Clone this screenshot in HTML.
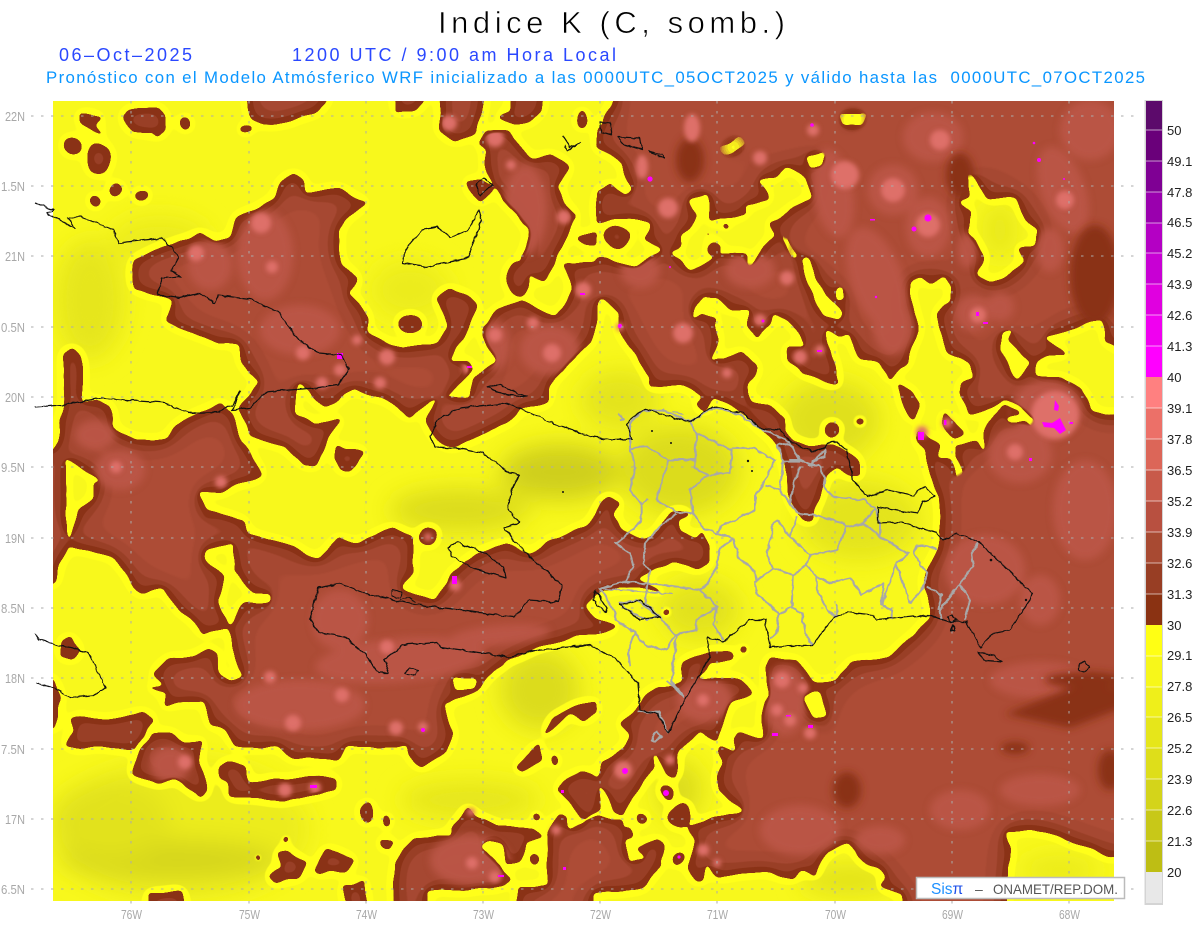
<!DOCTYPE html>
<html><head><meta charset="utf-8"><title>Indice K</title>
<style>html,body{margin:0;padding:0;background:#fff}svg{display:block}text{font-family:"Liberation Sans",sans-serif}</style>
</head><body>
<svg width="1200" height="927" viewBox="0 0 1200 927" xmlns="http://www.w3.org/2000/svg">
<defs>
<clipPath id="plot"><rect x="53" y="101" width="1061" height="800"/></clipPath>
<filter id="soft" x="-100" y="-100" width="1500" height="1200" filterUnits="userSpaceOnUse"><feGaussianBlur stdDeviation="12"/></filter>
<filter id="s5" x="-100" y="-100" width="1500" height="1200" filterUnits="userSpaceOnUse"><feGaussianBlur stdDeviation="4"/></filter>
<filter id="s3" x="-100" y="-100" width="1500" height="1200" filterUnits="userSpaceOnUse"><feGaussianBlur stdDeviation="2.5"/></filter>
<filter id="wob" x="-100" y="-100" width="1500" height="1200" filterUnits="userSpaceOnUse" color-interpolation-filters="sRGB">
 <feTurbulence type="fractalNoise" baseFrequency=".13" numOctaves="2" seed="7" result="n"/>
 <feDisplacementMap in="SourceGraphic" in2="n" scale="4" xChannelSelector="R" yChannelSelector="G"/>
</filter>
<filter id="bands" x="-100" y="-100" width="1500" height="1200" filterUnits="userSpaceOnUse" color-interpolation-filters="sRGB">
 <feTurbulence type="fractalNoise" baseFrequency=".035" numOctaves="2" seed="3" result="n"/>
 <feDisplacementMap in="SourceAlpha" in2="n" scale="9" xChannelSelector="R" yChannelSelector="G" result="d"/>
 <feGaussianBlur in="d" stdDeviation="2" result="b0"/>
 <feComponentTransfer in="b0" result="t0"><feFuncA type="linear" slope="40" intercept="-19.5"/></feComponentTransfer>
 <feFlood flood-color="#8a3216"/><feComposite in2="t0" operator="in" result="c0"/>
 <feGaussianBlur in="d" stdDeviation="7" result="b1"/>
 <feComponentTransfer in="b1" result="t1"><feFuncA type="linear" slope="40" intercept="-31.5"/></feComponentTransfer>
 <feFlood flood-color="#993f26"/><feComposite in2="t1" operator="in" result="c1"/>
 <feGaussianBlur in="d" stdDeviation="12" result="b2"/>
 <feComponentTransfer in="b2" result="t2"><feFuncA type="linear" slope="40" intercept="-33.5"/></feComponentTransfer>
 <feFlood flood-color="#a64832"/><feComposite in2="t2" operator="in" result="c2"/>
 <feGaussianBlur in="d" stdDeviation="18" result="b3"/>
 <feComponentTransfer in="b3" result="t3"><feFuncA type="linear" slope="40" intercept="-35.5"/></feComponentTransfer>
 <feFlood flood-color="#ad4c36"/><feComposite in2="t3" operator="in" result="c3"/>
 <feMerge><feMergeNode in="c0"/><feMergeNode in="c1"/><feMergeNode in="c2"/><feMergeNode in="c3"/></feMerge>
</filter>
<filter id="halo" x="-100" y="-100" width="1500" height="1200" filterUnits="userSpaceOnUse" color-interpolation-filters="sRGB">
 <feTurbulence type="fractalNoise" baseFrequency=".035" numOctaves="2" seed="3" result="n"/>
 <feDisplacementMap in="SourceAlpha" in2="n" scale="9" xChannelSelector="R" yChannelSelector="G" result="d"/>
 <feGaussianBlur in="d" stdDeviation="6"/>
 <feComponentTransfer result="t"><feFuncA type="linear" slope="30" intercept="-3"/></feComponentTransfer>
 <feFlood flood-color="#ffff1a"/><feComposite in2="t" operator="in"/>
</filter>
<filter id="inner" x="-100" y="-100" width="1500" height="1200" filterUnits="userSpaceOnUse" color-interpolation-filters="sRGB">
 <feTurbulence type="fractalNoise" baseFrequency=".035" numOctaves="2" seed="3" result="n"/>
 <feDisplacementMap in="SourceAlpha" in2="n" scale="9" xChannelSelector="R" yChannelSelector="G" result="d"/>
 <feGaussianBlur in="d" stdDeviation="5"/>
 <feComponentTransfer result="t"><feFuncA type="linear" slope="8" intercept="-5"/></feComponentTransfer>
 <feFlood flood-color="#fff"/><feComposite in2="t" operator="in"/>
</filter>
<mask id="holes" maskUnits="userSpaceOnUse" x="-100" y="-100" width="1500" height="1200">
<rect x="-100" y="-100" width="1500" height="1200" fill="#fff"/>
<g fill="#000">
<polygon points="596,147 620,163 625,180 632,190 625,197 610,183 596,190"/>
<polygon points="590,90 618,90 612,108 600,125 590,130"/>
<polygon points="590,225 630,217 652,223 643,240 662,250 637,265 590,255"/>
<polygon points="670,252 680,247 680,237 688,230 698,213 688,200 708,193 710,220 747,215 747,205 770,200 757,180 777,180 788,167 807,178 812,197 787,213 768,223 775,235 765,247 747,270 747,253 733,250 715,257 690,272 683,260"/>
<polygon points="717,147 730,143 738,135 747,143 733,155 722,155"/>
<polygon points="805,155 827,152 822,165 810,168"/>
<polygon points="838,113 870,115 863,127 842,125"/>
<polygon points="999,155 1008,154 1007,163 1002,163"/>
<polygon points="968,170 977,183 987,198 1017,198 1025,220 1040,228 1037,245 1017,247 1025,262 1007,277 990,282 978,273 982,257 977,240 968,233 972,213 960,202 970,197"/>
<polygon points="1042,338 1070,330 1102,320 1105,340 1130,353 1130,412 1092,412 1083,387 1060,377 1035,378 1035,363 1047,357 1068,357 1058,348"/>
<polygon points="1003,330 1015,328 1008,340 1030,363 1017,380 1008,370 1000,350"/>
<polygon points="783,233 788,232 799,257 793,257"/>
<polygon points="800,260 806,258 820,285 842,313 838,320 825,316 812,290"/>
<polygon points="837,290 842,288 844,300 838,303"/>
<polygon points="803,698 820,693 827,717 813,717"/>
<polygon points="829,735 832,730 836,745 830,752"/>
<polygon points="1005,830 1030,830 1060,837 1112,857 1130,857 1130,960 1000,960 1007,877 1007,867 1012,850"/>
<polygon points="1050,712 1072,707 1062,713"/>
<polygon points="64,457 104,482 93,482 93,500 77,510 68,547"/>
<polygon points="207,550 234,543 232,570 253,593 269,593 269,603 246,603 230,627 217,600 227,577 207,560"/>
<ellipse cx="280" cy="575" rx="4" ry="6"/><ellipse cx="253" cy="563" rx="3" ry="3"/><ellipse cx="203" cy="521" rx="5" ry="3"/>
<polygon points="453,677 476,677 472,687 455,690"/>
<ellipse cx="265" cy="350" rx="4" ry="8"/>
<ellipse cx="529" cy="357" rx="6" ry="10"/><ellipse cx="525" cy="335" rx="5" ry="11"/>
<ellipse cx="1018" cy="420" rx="12" ry="3"/>
</g>
</mask>
<g id="brown">
<g mask="url(#holes)">
<polygon points="596,40 1180,40 1180,960 902,960 902,893 877,887 888,877 877,867 858,857 850,843 827,852 817,877 800,870 790,880 770,873 718,877 707,863 703,880 697,883 688,867 693,840 687,827 700,820 743,813 718,790 717,777 723,762 717,753 720,747 733,753 733,740 740,732 763,737 763,700 767,693 765,667 770,657 777,657 797,660 813,683 837,680 850,662 890,657 913,637 928,617 925,590 927,570 942,537 938,497 930,473 927,450 915,440 918,430 925,432 930,438 942,445 938,458 950,458 957,483 962,472 953,453 952,443 977,440 987,460 985,433 993,417 1005,405 1020,412 1032,428 1035,420 1022,408 1005,400 985,412 970,415 960,393 960,383 973,380 970,363 962,357 947,353 940,330 937,313 950,303 952,288 943,273 930,285 920,277 910,283 915,313 917,327 910,363 900,367 890,380 880,363 860,357 850,333 840,337 823,330 837,373 840,383 833,383 803,373 787,360 785,345 807,347 787,320 773,313 770,327 760,340 748,327 750,310 730,310 717,297 703,297 690,320 703,313 717,320 713,327 720,340 707,363 717,358 723,360 742,353 757,367 748,383 752,402 770,405 787,417 787,428 785,430 793,443 813,447 833,443 847,453 860,460 860,477 850,478 837,470 827,477 817,503 813,522 803,522 797,513 790,497 783,463 777,447 763,432 743,413 713,398 705,412 695,403 703,395 697,393 683,385 650,387 650,377 633,353 617,330 617,313 600,300 596,297"/>
<polygon points="10,450 53,453 58,443 62,407 64,353 74,348 83,357 83,387 81,403 98,400 110,407 112,427 135,440 165,440 173,428 219,400 232,413 240,443 265,473 223,492 198,490 207,508 246,523 250,537 265,538 284,543 317,560 338,537 357,543 391,528 414,537 414,570 403,587 433,600 450,577 464,560 506,543 529,553 552,538 586,527 602,503 610,498 622,503 615,517 623,530 643,537 660,530 673,513 692,512 680,520 683,530 697,537 702,530 710,547 708,563 697,570 673,562 652,570 635,580 673,593 650,590 623,587 605,590 585,605 595,618 620,627 600,635 576,638 537,650 507,660 476,690 446,703 442,700 453,733 446,750 423,768 409,757 407,747 377,747 345,745 339,760 293,757 277,747 235,747 224,730 208,725 205,700 164,707 166,693 143,688 164,685 153,672 166,658 193,657 210,647 218,655 220,673 231,680 245,675 231,647 228,628 204,633 181,613 163,590 142,593 112,558 68,547 62,560 53,583 10,583"/>
</g>
<polygon points="281,183 293,173 303,180 308,192 338,188 367,202 346,218 338,233 341,263 357,277 349,293 368,317 366,332 403,350 437,343 443,360 470,362 475,370 452,393 429,402 410,420 395,407 357,388 326,407 311,397 295,380 303,370 297,377 295,413 315,425 341,418 315,467 305,467 284,447 250,437 238,410 257,383 242,363 240,343 219,343 165,323 173,300 135,290 133,260 173,243 200,232 215,242 230,238 236,217 273,200"/>
<polygon points="437,345 448,325 438,300 450,288 478,306 464,337 445,362"/>
<polygon points="481,327 498,310 521,300 556,317 573,290 563,263 598,260 600,290 598,313 590,343 548,387 548,403 521,407 506,423 487,432 456,447 437,440 426,423 433,403 449,397 472,398 475,377 498,360 481,337"/>
<polygon points="488,128 509,127 515,140 530,157 553,152 570,167 557,185 564,202 575,217 556,263 544,282 533,277 521,260 529,230 502,200 499,192 486,172 486,152 476,145"/>
<polygon points="465,183 480,178 493,185 482,203 469,192"/>
<polygon points="575,237 597,232 597,247 585,245"/>
<polygon points="80,113 103,115 94,122 111,138 92,128 80,122"/>
<polygon points="128,110 159,108 164,115 164,130 157,140 151,133 132,132 122,117"/>
<polygon points="239,60 327,60 327,101 316,113 293,122 262,125 249,120"/>
<polygon points="386,60 426,60 426,101 415,110 396,113"/>
<polygon points="442,60 484,60 484,101 476,132 455,142 438,132 442,115"/>
<polygon points="509,60 543,60 543,101 541,112 530,123 515,123 499,115 510,112"/>
<ellipse cx="185" cy="124" rx="5" ry="6"/><ellipse cx="72" cy="146" rx="9" ry="9"/><ellipse cx="97" cy="158" rx="11" ry="15"/><ellipse cx="117" cy="190" rx="7" ry="7"/><ellipse cx="141" cy="195" rx="6" ry="6"/><ellipse cx="94" cy="201" rx="5" ry="5"/><ellipse cx="245" cy="131" rx="6" ry="4"/><ellipse cx="580" cy="120" rx="5" ry="9"/><ellipse cx="519" cy="280" rx="11" ry="17"/><ellipse cx="410" cy="324" rx="10" ry="9"/>
<ellipse cx="428" cy="537" rx="9" ry="8"/>
<polygon points="338,445 345,450 365,452 357,460 351,472 340,470 333,458"/>
<polygon points="71,635 80,647 73,660 61,657 61,640"/>
<polygon points="53,677 61,700 55,727 10,727 10,677"/>
<polygon points="67,717 78,715 105,720 143,712 155,717 145,730 136,750 99,747 63,747 73,730"/>
<polygon points="151,732 170,732 185,743 203,740 201,760 207,790 201,799 193,793 174,777 159,783 132,773 138,757"/>
<polygon points="218,767 228,763 247,765 250,782 277,780 304,775 335,777 335,790 319,795 285,802 250,797 228,797 226,780 218,777"/>
<ellipse cx="367" cy="813" rx="7" ry="11"/><ellipse cx="386" cy="822" rx="4" ry="6"/><polygon points="377,838 394,842 388,852 381,848"/><ellipse cx="285" cy="841" rx="3" ry="4"/><ellipse cx="258" cy="858" rx="3" ry="4"/><ellipse cx="537" cy="815" rx="4" ry="4"/><ellipse cx="534" cy="860" rx="6" ry="6"/>
<polygon points="539,742 541,760 522,772 514,767 530,750"/>
<polygon points="553,715 595,698 597,713 583,723 570,713 553,727 541,738"/>
<ellipse cx="552" cy="760" rx="4" ry="6"/>
<polygon points="275,853 289,850 308,862 296,877 277,883 268,875 281,867"/>
<polygon points="312,870 325,850 338,852 354,860 346,872 331,870 317,873"/>
<polygon points="149,893 182,892 187,950 149,950"/>
<polygon points="342,885 365,880 367,950 355,950"/>
<polygon points="392,950 394,863 413,837 449,838 451,827 469,807 478,817 499,827 532,827 543,838 524,843 520,863 507,863 503,843 488,840 480,847 501,863 513,880 505,887 427,892 430,950"/>
<polygon points="516,950 516,887 548,885 547,833 560,813 568,817 568,830 600,815 610,820 622,820 623,833 630,863 647,860 663,863 643,887 623,890 595,892 590,950"/>
<polygon points="637,850 658,837 665,843 660,863 648,860"/>
<polygon points="555,792 564,783 583,770 599,777 601,810 583,820 570,803"/>
<polygon points="620,727 643,700 657,687 683,680 710,678 743,680 752,693 733,700 723,727 718,743 700,732 680,750 675,780 668,777 658,757 653,747 655,767 633,797 623,817 613,813 607,797 600,783 600,763 623,747 630,737"/>
<polygon points="683,662 713,650 732,655 733,662 710,663 700,677 683,680"/>
<ellipse cx="743" cy="649" rx="4" ry="4"/><ellipse cx="666" cy="793" rx="6" ry="6"/><ellipse cx="642" cy="819" rx="5" ry="5"/><ellipse cx="628" cy="833" rx="6" ry="6"/><ellipse cx="679" cy="857" rx="6" ry="6"/><ellipse cx="680" cy="815" rx="11" ry="13"/>
<polygon points="897,380 913,390 920,407 913,420 903,407"/>
<polygon points="943,412 953,420 963,433 952,437 940,423"/>
<ellipse cx="832" cy="430" rx="7.5" ry="7.5"/><ellipse cx="860" cy="421" rx="4" ry="4"/><ellipse cx="668" cy="610" rx="3.5" ry="3.5"/>
<ellipse cx="617" cy="238" rx="13" ry="12"/><ellipse cx="713" cy="250" rx="8" ry="6"/><ellipse cx="727" cy="227" rx="4" ry="4"/><ellipse cx="707" cy="234" rx="3" ry="3"/>
</g>
<mask id="inside" maskUnits="userSpaceOnUse" x="-100" y="-100" width="1500" height="1200">
 <use href="#brown" filter="url(#inner)"/>
</mask>
</defs>

<rect width="1200" height="927" fill="#fff"/>

<g clip-path="url(#plot)">
 <rect x="53" y="101" width="1061" height="800" fill="#f8f81c"/>
 <g filter="url(#soft)">
  <ellipse cx="560" cy="472" rx="60" ry="28" fill="#cfcf1a"/>
  <ellipse cx="460" cy="510" rx="70" ry="22" fill="#dcdc1c"/>
  <ellipse cx="680" cy="470" rx="60" ry="45" fill="#dcdc1c"/>
  <ellipse cx="860" cy="520" rx="60" ry="40" fill="#e4e41c"/>
  <ellipse cx="830" cy="420" rx="50" ry="40" fill="#e0e01c"/>
  <ellipse cx="700" cy="610" rx="40" ry="30" fill="#e2e21c"/>
  <ellipse cx="620" cy="400" rx="40" ry="30" fill="#e4e41c"/>
  <ellipse cx="180" cy="830" rx="130" ry="70" fill="#ecec1c"/>
  <ellipse cx="170" cy="860" rx="110" ry="20" fill="#d6d61a"/>
  <ellipse cx="110" cy="820" rx="60" ry="40" fill="#e2e21c"/>
  <ellipse cx="90" cy="300" rx="35" ry="60" fill="#e6e61c"/>
  <ellipse cx="160" cy="240" rx="50" ry="25" fill="#ecec1c"/>
  <ellipse cx="470" cy="800" rx="70" ry="20" fill="#e6e61c"/>
  <ellipse cx="540" cy="690" rx="40" ry="40" fill="#dcdc1c"/>
  <ellipse cx="680" cy="790" rx="22" ry="30" fill="#dcdc1c"/>
  <ellipse cx="850" cy="880" rx="50" ry="16" fill="#e2e21c"/>
  <ellipse cx="1060" cy="870" rx="40" ry="15" fill="#eaea1c"/>
  <ellipse cx="410" cy="290" rx="40" ry="30" fill="#ecec1c"/>
  <ellipse cx="1000" cy="230" rx="18" ry="30" fill="#e8e81c"/>
 </g>
 <use href="#brown" filter="url(#halo)"/>
 <use href="#brown" filter="url(#bands)"/>

 <g mask="url(#inside)">
 <g filter="url(#s5)" fill="#bb5747" opacity=".95">
  <ellipse cx="833" cy="193" rx="20" ry="45" transform="rotate(-10 833 193)"/>
  <ellipse cx="893" cy="190" rx="25" ry="25"/><ellipse cx="928" cy="227" rx="22" ry="30"/><ellipse cx="933" cy="137" rx="30" ry="25"/>
  <ellipse cx="877" cy="280" rx="26" ry="55" transform="rotate(-20 877 280)"/><ellipse cx="893" cy="327" rx="20" ry="28"/>
  <ellipse cx="1063" cy="190" rx="22" ry="45" transform="rotate(-20 1063 190)"/><ellipse cx="1050" cy="250" rx="14" ry="22"/><ellipse cx="967" cy="250" rx="10" ry="18"/>
  <ellipse cx="973" cy="313" rx="18" ry="18"/><ellipse cx="1000" cy="307" rx="14" ry="14"/>
  <ellipse cx="1047" cy="410" rx="35" ry="30"/><ellipse cx="1020" cy="455" rx="32" ry="28"/><ellipse cx="1085" cy="510" rx="32" ry="50"/>
  <ellipse cx="1090" cy="130" rx="30" ry="30"/><ellipse cx="985" cy="570" rx="40" ry="35"/><ellipse cx="1040" cy="600" rx="20" ry="25"/>
  <ellipse cx="800" cy="830" rx="40" ry="25"/><ellipse cx="880" cy="840" rx="25" ry="14"/><ellipse cx="960" cy="810" rx="30" ry="20"/><ellipse cx="1040" cy="790" rx="40" ry="16"/><ellipse cx="1040" cy="680" rx="50" ry="18"/>
  <ellipse cx="400" cy="660" rx="85" ry="22" transform="rotate(-5 400 660)"/><ellipse cx="300" cy="705" rx="65" ry="25"/><ellipse cx="340" cy="620" rx="28" ry="30"/><ellipse cx="500" cy="635" rx="50" ry="10" transform="rotate(-5 500 635)"/>
  <ellipse cx="265" cy="255" rx="28" ry="45"/><ellipse cx="210" cy="265" rx="22" ry="25"/><ellipse cx="300" cy="330" rx="40" ry="25"/><ellipse cx="120" cy="470" rx="25" ry="20"/><ellipse cx="95" cy="435" rx="20" ry="15"/>
  <ellipse cx="705" cy="700" rx="28" ry="22"/><ellipse cx="785" cy="700" rx="22" ry="35"/><ellipse cx="470" cy="860" rx="40" ry="25"/><ellipse cx="170" cy="765" rx="20" ry="18"/>
  <ellipse cx="525" cy="210" rx="22" ry="45"/><ellipse cx="550" cy="350" rx="30" ry="25"/><ellipse cx="495" cy="345" rx="15" ry="25"/><ellipse cx="750" cy="270" rx="25" ry="18"/><ellipse cx="640" cy="270" rx="20" ry="18"/>
 </g>
 <g filter="url(#s5)" fill="#8a3216">
  <path d="M1005,714 L1070,688 L1130,686 L1130,705 L1070,728 Z"/>
  <ellipse cx="1015" cy="748" rx="14" ry="6"/><ellipse cx="847" cy="790" rx="14" ry="18"/><ellipse cx="1095" cy="275" rx="25" ry="50"/><ellipse cx="960" cy="175" rx="14" ry="22"/><ellipse cx="1085" cy="680" rx="40" ry="8"/><ellipse cx="1110" cy="770" rx="12" ry="20"/><ellipse cx="690" cy="160" rx="14" ry="22"/>
 </g>
 <g filter="url(#s3)" fill="#de6f69">
  <circle cx="261" cy="223" r="10"/><circle cx="196" cy="253" r="8"/><circle cx="272" cy="267" r="6"/><circle cx="387" cy="357" r="8"/><circle cx="357" cy="340" r="5"/><circle cx="380" cy="383" r="6"/><circle cx="303" cy="353" r="7"/><circle cx="340" cy="370" r="6"/><circle cx="322" cy="383" r="6"/>
  <circle cx="495" cy="335" r="7"/><circle cx="552" cy="353" r="9"/><circle cx="533" cy="323" r="6"/><circle cx="583" cy="290" r="8"/><circle cx="468" cy="368" r="6"/>
  <circle cx="495" cy="138" r="9"/><circle cx="449" cy="123" r="8"/><circle cx="511" cy="165" r="5"/><circle cx="564" cy="217" r="7"/>
  <ellipse cx="692" cy="128" rx="8" ry="14"/><ellipse cx="642" cy="167" rx="6" ry="12"/><circle cx="668" cy="208" r="10"/><circle cx="760" cy="158" r="7"/><circle cx="787" cy="278" r="7"/><circle cx="683" cy="333" r="10"/><circle cx="800" cy="357" r="7"/><circle cx="820" cy="350" r="5"/><circle cx="760" cy="320" r="6"/><circle cx="813" cy="130" r="6"/><circle cx="727" cy="373" r="5"/>
  <circle cx="845" cy="175" r="14"/><circle cx="893" cy="190" r="12"/><circle cx="928" cy="225" r="12"/><circle cx="940" cy="140" r="10"/><circle cx="1065" cy="200" r="9"/><circle cx="978" cy="315" r="8"/><circle cx="1055" cy="415" r="24"/><circle cx="1015" cy="452" r="8"/>
  <circle cx="782" cy="680" r="8"/><circle cx="803" cy="688" r="5"/><circle cx="777" cy="710" r="6"/><circle cx="790" cy="720" r="6"/><circle cx="810" cy="733" r="6"/><circle cx="623" cy="770" r="9"/><circle cx="670" cy="760" r="5"/><circle cx="703" cy="700" r="6"/><circle cx="703" cy="850" r="6"/><circle cx="717" cy="863" r="4"/>
  <circle cx="293" cy="723" r="8"/><circle cx="342" cy="695" r="7"/><circle cx="270" cy="677" r="6"/><circle cx="396" cy="728" r="7"/><circle cx="423" cy="727" r="5"/><circle cx="185" cy="762" r="7"/><circle cx="285" cy="790" r="7"/><circle cx="315" cy="788" r="6"/><circle cx="472" cy="863" r="6"/><circle cx="495" cy="877" r="6"/><circle cx="116" cy="467" r="6"/><circle cx="221" cy="482" r="6"/><circle cx="387" cy="647" r="7"/><circle cx="455" cy="585" r="6"/>
 </g>
 </g>
 <g filter="url(#s3)" fill="#de6f69">
  <circle cx="922" cy="432" r="6"/><circle cx="947" cy="423" r="5"/><circle cx="620" cy="327" r="4"/><circle cx="428" cy="537" r="4"/><circle cx="471" cy="812" r="4"/><circle cx="556" cy="830" r="5"/>
 </g>
 <g fill="#ff00ff">
  <circle cx="650" cy="179" r="2.6"/><circle cx="812" cy="125" r="1.8"/><circle cx="928" cy="218" r="3.6"/><circle cx="914" cy="229" r="2.5"/><circle cx="1039" cy="160" r="2"/><circle cx="1034" cy="143" r="1.3"/><circle cx="1064" cy="179" r="1"/><circle cx="876" cy="297" r="1.2"/><circle cx="670" cy="267" r="1"/>
  <rect x="580" y="293" width="5" height="2"/><circle cx="620" cy="326" r="2.2"/><circle cx="763" cy="321" r="1.5"/><rect x="817" y="350" width="5" height="2"/><rect x="337" y="353" width="6" height="6"/><rect x="467" y="366" width="5" height="2"/><rect x="452" y="576" width="5" height="8"/><rect x="918" y="432" width="6" height="8"/><rect x="944" y="420" width="2.5" height="5"/><rect x="976" y="312" width="3" height="4"/><rect x="983" y="322" width="5" height="2"/><rect x="1029" y="458" width="3" height="3"/>
  <path d="M1055,400 L1059,406 L1058,411 L1054,410 Z"/><path d="M1042,422 L1052,423 L1060,418 L1066,430 L1060,434 L1054,428 L1044,427 Z"/><rect x="1069" y="422" width="4" height="2"/>
  <circle cx="423" cy="730" r="2"/><rect x="310" y="785" width="7" height="3"/><rect x="772" y="733" width="6" height="3"/><rect x="786" y="715" width="5" height="1.5"/><rect x="808" y="725" width="5" height="3"/><circle cx="625" cy="771" r="3"/><circle cx="666" cy="793" r="3"/><rect x="561" y="790" width="3" height="3"/><rect x="498" y="875" width="6" height="2"/><rect x="563" y="867" width="3" height="3"/><circle cx="679" cy="857" r="1.6"/><rect x="870" y="219" width="5" height="1.5"/>
 </g>
</g>

<!-- grid -->
<g stroke="#ababab" stroke-width="1" stroke-dasharray="2.5 7.5" fill="none">
 <path d="M31,116H1136M31,186H1136M31,256H1136M31,327H1136M31,397H1136M31,467H1136M31,538H1136M31,608H1136M31,678H1136M31,749H1136M31,819H1136M31,889H1136"/>
 <path d="M131,101V905M249,101V905M366,101V905M483,101V905M600,101V905M717,101V905M835,101V905M952,101V905M1069,101V905"/>
</g>

<!-- province lines -->
<g filter="url(#wob)">
<g transform="translate(580 390) scale(.33333)" fill="none" stroke="#a8a8a8" stroke-width="6" stroke-linejoin="round">
 <path d="M150,100 L150,170 L165,235 L150,300 L185,345 L185,390 L130,445 L105,460 L150,490 L160,530 L135,575 L60,595 L100,660 L110,690 L165,730 L145,780 L150,830"/>
 <path d="M150,175 L200,170 L265,210 L345,210 L350,130 L330,95"/>
 <path d="M265,210 L230,330 L290,365 L340,370 L330,300 L385,255 L345,235 L350,130 L455,180 L450,250 L390,255"/>
 <path d="M455,175 L520,175 L585,210 L555,270 L525,320 L525,360 L430,405 L410,430 L370,415 L340,370"/>
 <path d="M205,325 L185,345 M150,100 L185,65 L250,60 L330,95 L400,55 L470,70 L540,115 L630,155"/>
 <path d="M555,285 L600,300 L610,210 L590,165 L630,160 L660,215 L610,215 M625,210 L660,210 L690,225 L735,180 L735,200 L695,215"/>
 <path d="M660,230 L640,290 L630,340 L650,370 L705,375 L750,390 L790,400 L800,410 L850,400 L885,355 L850,330 L760,320 L730,290 L735,265 L715,225 L680,225"/>
 <path d="M600,300 L630,340 M650,380 L630,440 L590,390 L575,405 L575,440 L560,485 L570,520 L580,535 L525,575 L530,610 L595,670 L590,730 L570,745"/>
 <path d="M630,440 L690,495 L680,525 L640,555 L580,535 M690,495 L770,480 L795,420 L800,410"/>
 <path d="M680,525 L710,560 L750,580 L810,565 L845,615 L910,580 L905,645 L935,660 L935,690"/>
 <path d="M640,555 L635,650 L595,675 M635,650 L665,670 L675,730 L700,765 M710,560 L715,610 L750,670 L770,680 L770,640"/>
 <path d="M850,400 L900,440 L985,490 L950,520 L905,645 M950,525 L990,640 L1030,590 L1040,550 L1000,490 L1010,465 L1070,475 M900,440 L900,400 L885,355"/>
 <path d="M1195,460 L1175,490 L1180,530 L1140,580 L1080,660 L1085,690 M1040,590 L1085,615 L1075,660 M1140,585 L1170,630 L1155,690"/>
 <path d="M460,445 L475,500 L525,545 L530,575 M460,445 L420,475 L410,530 L385,580 L360,600 L200,580 L130,575 M360,600 L410,650 L400,700 L430,750 M410,430 L460,445"/>
 <path d="M410,650 L350,690 L350,720 L285,735 L260,780 L195,765 L150,715 M290,735 L275,875 L310,920 L260,870"/>
 <path d="M195,460 L240,410 L290,370 M195,460 L190,520 L210,540 L195,640 L240,680 L285,735"/>
 <path d="M170,965 L235,965 L265,1030 M215,1050 L230,1025 L245,1040 L225,1055 Z M120,640 L170,630 L235,680 L200,690 L140,660 Z M115,70 L130,85 L120,90"/>
 <path d="M280,65 L310,75 M60,595 L280,612" stroke-width="4"/>
</g>
</g>

<!-- coast -->
<g filter="url(#wob)">
<g fill="none" stroke="#111" stroke-width="1.2" stroke-linejoin="round">
 <path d="M437,420 L460,408 L506,403 L517,407 L562,427 L580,432 L593,437 L613,440 L633,439 M632,440 L627,423 L640,412 L647,410 L690,422 L713,407 L743,413 L760,428 L780,430 L793,443 L813,452 L825,448 L827,443 L837,442 L847,450 L853,480 L867,497 L887,490 L913,495 L925,487 L935,497 L923,501 L918,513 L878,507 L878,523 L900,522 L937,533 L943,540 L957,533 L980,543 L1032,593 L1030,600 L1010,630 L993,633 L980,647 L967,622 L950,622 L928,615 L877,620 L873,615 L847,612 L833,618 L813,645 L770,647 L765,620 L750,620 L723,642 L707,637 L710,657 L683,703 L668,733 L657,713 L640,710 L638,683 L617,660 L590,645 L537,650 L510,657 L441,647 L437,642 L403,645 L384,660 L389,673 L378,673 L364,653 L345,637 L319,633 L310,620 L318,588 L338,583 L364,593 L407,603 L441,608 L479,613 L514,617 L529,600 L558,602 L562,585 L533,560 L512,538 L504,528 L519,523 L508,507 L512,490 L519,475 L510,473 L483,453 L458,448 L435,447 L430,437 L437,420"/>
 <path d="M449,547 L456,542 L483,552 L504,567 L506,578 L470,567 L452,557 Z"/>
 <path d="M35,407 L62,405 L100,398 L165,403 L188,413 L219,412 L232,405 L240,390 L232,410 L250,408 L265,392 L315,388 L338,385 L349,370 L341,355 L319,353 L299,340 L278,312 L253,300 L219,295 L215,303 L200,293 L179,298 L165,296 L158,295 L162,278 L181,277 L172,270 L179,257 L162,238 L118,243 L114,230 L81,217 L68,218 L75,228 L54,217 L47,213 L54,210 L35,203"/>
 <path d="M405,250 L422,230 L437,227 L450,237 L468,230 L479,210 L482,220 L468,258 L426,267 L403,263 Z"/>
 <path d="M487,388 L498,384 L527,397 L506,395 Z M484,178 L493,185 L480,195 L476,183 Z M562,135 L570,147 L580,143 L568,150 L564,145 M600,122 L610,123 L612,135 L602,132 Z M618,137 L640,138 L643,150 L620,143 Z M649,151 L662,155 L663,159 L652,153 Z"/>
 <path d="M35,633 L39,640 L58,645 L89,653 L106,688 L93,695 L70,697 L54,688 L37,683"/>
 <path d="M978,652 L993,655 L1002,662 L983,660 Z M947,617 L952,615 L957,620 L952,622 Z M1079,665 L1085,661 L1089,668 L1085,671 L1079,670 Z M952,625 L955,630 L951,631 Z"/>
 <path d="M595,590 L593,600 L605,612 L607,608 Z M620,605 L640,600 L660,617 L640,620 Z"/>
 <path d="M400,600 L408,597 L415,602 M392,590 L402,592 L400,598 L392,596 Z M410,668 L418,670 L415,675 L405,673 Z" stroke-width="1"/>
</g>
</g>
<g fill="#111"><circle cx="652" cy="431" r="1"/><circle cx="671" cy="443" r="1"/><circle cx="748" cy="461" r="1.2"/><circle cx="752" cy="471" r="1"/><circle cx="991" cy="560" r="1.3"/><circle cx="1026" cy="600" r="1.2"/><circle cx="563" cy="492" r="1"/></g>

<!-- legend box -->
<rect x="916.5" y="877.5" width="208" height="21" fill="#fff" stroke="#bbb" stroke-width="1.5"/>
<text x="931" y="894" font-size="15.5" fill="#1e90ff">Sis<tspan fill="#1f50e8">π</tspan></text>
<text x="975" y="894" font-size="14" fill="#555">–</text>
<text x="993" y="894" font-size="14" fill="#555" textLength="125" lengthAdjust="spacingAndGlyphs">ONAMET/REP.DOM.</text>

<!-- axis labels -->
<g font-size="12.5" fill="#a8a8a8" text-anchor="end">
 <text x="25" y="121" textLength="20" lengthAdjust="spacingAndGlyphs">22N</text><text x="25" y="191" textLength="24" lengthAdjust="spacingAndGlyphs">1.5N</text><text x="25" y="261" textLength="20" lengthAdjust="spacingAndGlyphs">21N</text><text x="25" y="332" textLength="24" lengthAdjust="spacingAndGlyphs">0.5N</text><text x="25" y="402" textLength="20" lengthAdjust="spacingAndGlyphs">20N</text><text x="25" y="472" textLength="24" lengthAdjust="spacingAndGlyphs">9.5N</text><text x="25" y="543" textLength="20" lengthAdjust="spacingAndGlyphs">19N</text><text x="25" y="613" textLength="24" lengthAdjust="spacingAndGlyphs">8.5N</text><text x="25" y="683" textLength="20" lengthAdjust="spacingAndGlyphs">18N</text><text x="25" y="754" textLength="24" lengthAdjust="spacingAndGlyphs">7.5N</text><text x="25" y="824" textLength="20" lengthAdjust="spacingAndGlyphs">17N</text><text x="25" y="894" textLength="24" lengthAdjust="spacingAndGlyphs">6.5N</text>
</g>
<g font-size="13" fill="#a8a8a8">
 <text x="121" y="919" textLength="21" lengthAdjust="spacingAndGlyphs">76W</text><text x="239" y="919" textLength="21" lengthAdjust="spacingAndGlyphs">75W</text><text x="356" y="919" textLength="21" lengthAdjust="spacingAndGlyphs">74W</text><text x="473" y="919" textLength="21" lengthAdjust="spacingAndGlyphs">73W</text><text x="590" y="919" textLength="21" lengthAdjust="spacingAndGlyphs">72W</text><text x="707" y="919" textLength="21" lengthAdjust="spacingAndGlyphs">71W</text><text x="825" y="919" textLength="21" lengthAdjust="spacingAndGlyphs">70W</text><text x="942" y="919" textLength="21" lengthAdjust="spacingAndGlyphs">69W</text><text x="1059" y="919" textLength="21" lengthAdjust="spacingAndGlyphs">68W</text>
</g>

<!-- colour bar -->
<rect x="1144.5" y="100" width="18.5" height="805" fill="#d4d4d4"/>
<g shape-rendering="crispEdges">
<rect x="1146" y="101" width="16" height="29" fill="#5c0a6b"/><rect x="1146" y="130" width="16" height="31" fill="#6a007a"/><rect x="1146" y="161" width="16" height="31" fill="#7f0094"/><rect x="1146" y="192" width="16" height="31" fill="#9a00ae"/><rect x="1146" y="223" width="16" height="30" fill="#b400c4"/><rect x="1146" y="253" width="16" height="31" fill="#c800d4"/><rect x="1146" y="284" width="16" height="31" fill="#e000e0"/><rect x="1146" y="315" width="16" height="31" fill="#f000f0"/><rect x="1146" y="346" width="16" height="31" fill="#ff00ff"/>
<rect x="1146" y="377" width="16" height="31" fill="#ff8080"/><rect x="1146" y="408" width="16" height="31" fill="#ec7068"/><rect x="1146" y="439" width="16" height="31" fill="#dc6658"/><rect x="1146" y="470" width="16" height="31" fill="#c85a4a"/><rect x="1146" y="501" width="16" height="31" fill="#b85040"/><rect x="1146" y="532" width="16" height="31" fill="#a84a32"/><rect x="1146" y="563" width="16" height="31" fill="#983e24"/><rect x="1146" y="594" width="16" height="31" fill="#8a3212"/>
<rect x="1146" y="625" width="16" height="31" fill="#ffff14"/><rect x="1146" y="656" width="16" height="31" fill="#f7f71a"/><rect x="1146" y="687" width="16" height="30" fill="#efef1a"/><rect x="1146" y="717" width="16" height="31" fill="#e6e61a"/><rect x="1146" y="748" width="16" height="31" fill="#dede1a"/><rect x="1146" y="779" width="16" height="31" fill="#d4d41a"/><rect x="1146" y="810" width="16" height="31" fill="#c8c818"/><rect x="1146" y="841" width="16" height="31" fill="#bebe14"/><rect x="1146" y="872" width="16" height="31" fill="#e8e8e8"/>
</g>
<g stroke="#fff" stroke-opacity=".6" stroke-width="1" shape-rendering="crispEdges"><path d="M1146,130h16M1146,161h16M1146,192h16M1146,223h16M1146,253h16M1146,284h16M1146,315h16M1146,346h16M1146,408h16M1146,439h16M1146,470h16M1146,501h16M1146,532h16M1146,563h16M1146,594h16M1146,656h16M1146,687h16M1146,717h16M1146,748h16M1146,779h16M1146,810h16M1146,841h16"/></g>
<g font-size="13" fill="#222">
 <text x="1167" y="135">50</text><text x="1167" y="166">49.1</text><text x="1167" y="197">47.8</text><text x="1167" y="227">46.5</text><text x="1167" y="258">45.2</text><text x="1167" y="289">43.9</text><text x="1167" y="320">42.6</text><text x="1167" y="351">41.3</text><text x="1167" y="382">40</text><text x="1167" y="413">39.1</text><text x="1167" y="444">37.8</text><text x="1167" y="475">36.5</text><text x="1167" y="506">35.2</text><text x="1167" y="537">33.9</text><text x="1167" y="568">32.6</text><text x="1167" y="599">31.3</text><text x="1167" y="630">30</text><text x="1167" y="660">29.1</text><text x="1167" y="691">27.8</text><text x="1167" y="722">26.5</text><text x="1167" y="753">25.2</text><text x="1167" y="784">23.9</text><text x="1167" y="815">22.6</text><text x="1167" y="846">21.3</text><text x="1167" y="877">20</text>
</g>

<!-- titles -->
<text x="438" y="33" font-size="31" fill="#000" stroke="#fff" stroke-width=".6" textLength="347" lengthAdjust="spacing">Indice K (C, somb.)</text>
<text x="59" y="61" font-size="18" fill="#2a48ff" textLength="133" lengthAdjust="spacing">06–Oct–2025</text>
<text x="292" y="61" font-size="18" fill="#2a48ff" textLength="324" lengthAdjust="spacing">1200 UTC / 9:00 am Hora Local</text>
<text x="46" y="83" font-size="16.8" fill="#0a96ff" textLength="1099" lengthAdjust="spacing" xml:space="preserve">Pronóstico con el Modelo Atmósferico WRF inicializado a las 0000UTC_05OCT2025 y válido hasta las  0000UTC_07OCT2025</text>
</svg>
</body></html>
